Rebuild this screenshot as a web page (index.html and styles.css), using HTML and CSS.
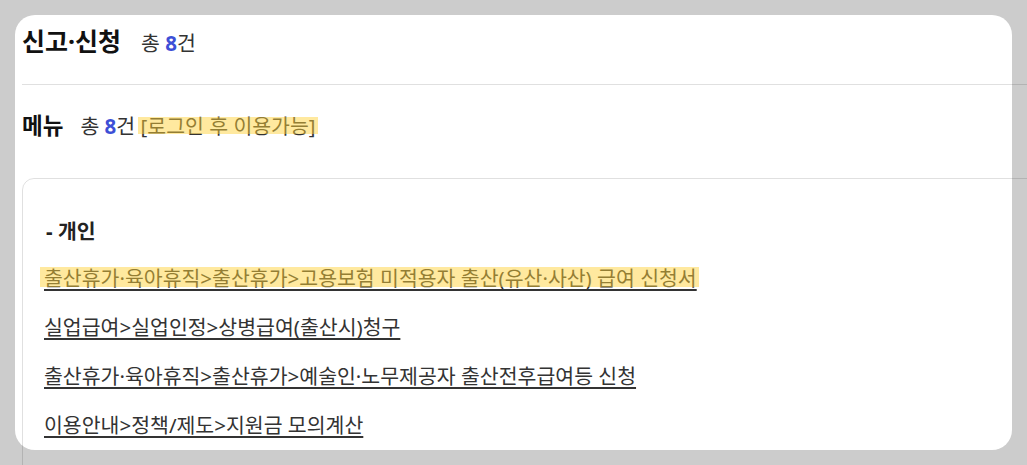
FILE: index.html
```html
<!DOCTYPE html>
<html>
<head>
	<title>신고·신청</title>
<link rel="stylesheet" href="styles.css">
</head>
<body>
	<div class="card">
		<div class="inner">
			<div class="title-row">
				<h2 class="title">신고·신청</h2>
				<span class="count">총 <b>8</b>건</span>
			</div>
			<div class="menu-row">
				<h3 class="menu-title">메뉴</h3>
				<span class="count">총 <b>8</b>건 <span class="mark">[로그인 후 이용가능]</span></span>
			</div>
			<div class="box">
				<p class="group">- 개인</p>
				<ul class="links">
					<li><a href="#" class="mark wide">출산휴가·육아휴직&gt;출산휴가&gt;고용보험 미적용자 출산(유산·사산) 급여 신청서</a></li>
					<li><a href="#">실업급여&gt;실업인정&gt;상병급여(출산시)청구</a></li>
					<li><a href="#">출산휴가·육아휴직&gt;출산휴가&gt;예술인·노무제공자 출산전후급여등 신청</a></li>
					<li><a href="#">이용안내&gt;정책/제도&gt;지원금 모의계산</a></li>
				</ul>
			</div>
		</div>
	</div>
</body>
</html>
```

FILE: styles.css
```css
html, body {
	margin: 0;
	height: 100%;
	overflow: hidden;
}

body {
	background: #cccccc;
	font-family: "Noto Sans", "Noto Sans CJK KR", sans-serif;
	color: #222;
}

.card {
	margin: 15px 0 0 15px;
	width: 997px;
	height: 435px;
	background: #fff;
	border-radius: 20px;
}

.inner {
	padding: 0 0 0 7px;
	width: 1040px;
}

.title-row {
	display: flex;
	align-items: baseline;
	gap: 20px;
	height: 69px;
	border-bottom: 1px solid rgba(0, 0, 0, 0.12);
}

.title {
	margin: 0;
	font-size: 25px;
	font-weight: 700;
	line-height: 53px;
	color: #111;
}

.count {
	font-size: 20.5px;
	color: #333;
}

.count b {
	color: #3d4fd6;
}

.menu-row {
	display: flex;
	align-items: baseline;
	gap: 17px;
	height: 93px;
}

.menu-title {
	margin: 0;
	font-size: 22.5px;
	font-weight: 700;
	line-height: 82px;
	color: #111;
}

.mark {
	position: relative;
	color: #333;
}

.mark::after {
	content: "";
	position: absolute;
	left: -3px;
	right: -2px;
	top: 5px;
	bottom: 6px;
	background: rgba(255, 210, 55, 0.48);
}

.box {
	border: 1px solid rgba(0, 0, 0, 0.12);
	border-radius: 12px;
	padding: 37px 22px 40px 21px;
	height: 400px;
}

.group {
	margin: 0 0 17px;
	padding-left: 2px;
	font-size: 20.5px;
	font-weight: 700;
	color: #222;
	line-height: 30px;
}

.links {
	list-style: none;
	margin: 0;
	padding: 0;
	display: flex;
	flex-direction: column;
	gap: 16px;
}

.links li {
	line-height: 31px;
}

.links a {
	font-size: 20.5px;
	color: #333;
	text-decoration: underline;
	text-decoration-thickness: 2px;
	text-underline-offset: 3px;
}

.links a.wide::after {
	top: 3px;
	bottom: 5px;
	left: -4px;
}
```
